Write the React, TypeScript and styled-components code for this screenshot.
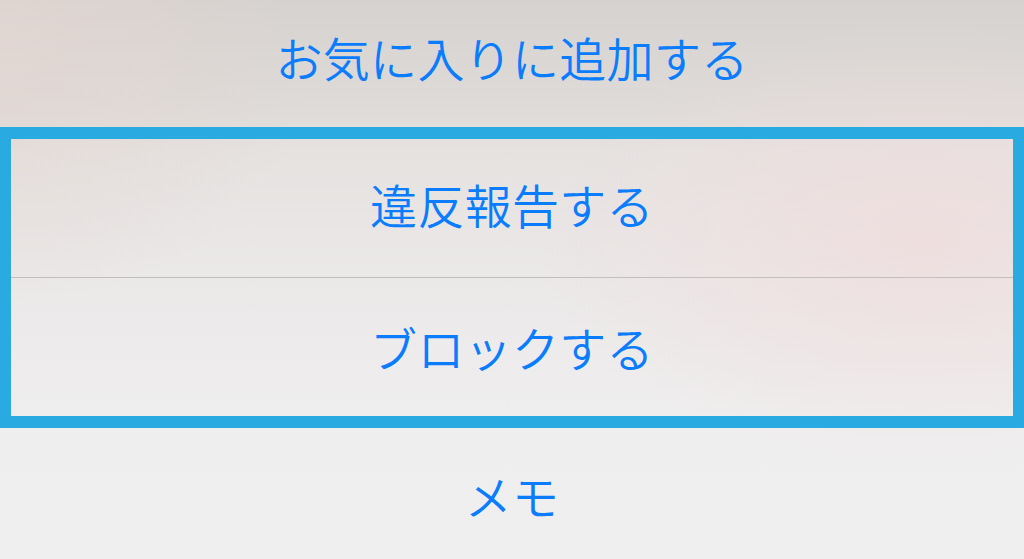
import React from "react";
import styled, { createGlobalStyle } from "styled-components";

const GlobalStyle = createGlobalStyle`
    html, body {
        margin: 0;
        padding: 0;
        width: 1024px;
        height: 559px;
        overflow: hidden;
    }
    body {
        font-family: "Noto Sans CJK JP", "Noto Sans", sans-serif;
        background:
            radial-gradient(ellipse 320px 260px at 0px 40px, rgba(228, 214, 210, 0.7), rgba(228, 214, 210, 0) 100%),
            radial-gradient(ellipse 380px 220px at 920px 240px, rgba(240, 220, 220, 0.75), rgba(240, 220, 220, 0) 100%),
            linear-gradient(180deg, #d5d2cf 0px, #dedbd8 110px, #e5e2e0 150px, #ebe8e8 280px, #efeeee 420px, #f0efef 559px);
    }
`;

const Sheet = styled.div`
    width: 1024px;
    height: 559px;
    display: flex;
    flex-direction: column;
    overflow: hidden;
`;

const Row = styled.div<{ $height: number; $offset?: number }>`
    flex: 0 0 ${({ $height }) => $height}px;
    height: ${({ $height }) => $height}px;
    display: flex;
    align-items: center;
    justify-content: center;
    padding-bottom: ${({ $offset }) => $offset ?? 6}px;
    box-sizing: border-box;
`;

const Label = styled.span`
    color: #0b7cfb;
    font-size: 47px;
    font-weight: 350;
    letter-spacing: 0.3px;
    line-height: 1;
`;

const Highlight = styled.div`
    flex: 0 0 auto;
    display: flex;
    flex-direction: column;
    border: 12px solid #29abe2;
    border-left-width: 11px;
    border-right-width: 11px;
`;

const Divider = styled.div`
    height: 1px;
    background: #c3bfbf;
`;

const App: React.FC = () => {
    return (
        <>
            <GlobalStyle />
            <Sheet>
                <Row $height={127} $offset={14}>
                    <Label>お気に入りに追加する</Label>
                </Row>
                <Highlight>
                    <Row $height={138} $offset={10}>
                        <Label>違反報告する</Label>
                    </Row>
                    <Divider />
                    <Row $height={138} $offset={2}>
                        <Label>ブロックする</Label>
                    </Row>
                </Highlight>
                <Row $height={139} $offset={6}>
                    <Label>メモ</Label>
                </Row>
            </Sheet>
        </>
    );
};

export default App;
